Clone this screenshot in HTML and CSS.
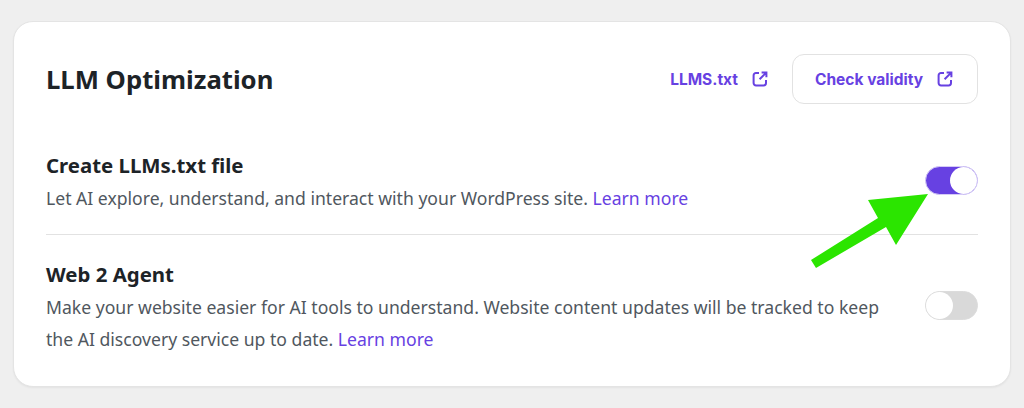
FILE: index.html
```html
<!DOCTYPE html>
<html lang="en">
<head>
  <meta charset="UTF-8">
  <title>LLM Optimization</title>
  <link rel="stylesheet" href="styles.css">
</head>
<body>
  <div class="card">
    <div class="card-head">
      <h2>LLM Optimization</h2>
      <div class="head-actions">
        <a class="action" href="#">LLMS.txt
          <svg class="ext" viewBox="0 0 16 16"><path d="M7 2H4a2.4 2.4 0 0 0-2.4 2.4v7.6A2.4 2.4 0 0 0 4 14.4h7.6a2.4 2.4 0 0 0 2.4-2.4V9M9.6 1.4h4.8v4.8M14.2 1.6L7.6 8.2"/></svg>
        </a>
        <a class="action action-outline" href="#">Check validity
          <svg class="ext" viewBox="0 0 16 16"><path d="M7 2H4a2.4 2.4 0 0 0-2.4 2.4v7.6A2.4 2.4 0 0 0 4 14.4h7.6a2.4 2.4 0 0 0 2.4-2.4V9M9.6 1.4h4.8v4.8M14.2 1.6L7.6 8.2"/></svg>
        </a>
      </div>
    </div>

    <div class="row row-first">
      <div class="row-text">
        <h3>Create LLMs.txt file</h3>
        <p>Let AI explore, understand, and interact with your WordPress site. <a href="#">Learn more</a></p>
      </div>
      <span class="toggle on"></span>
    </div>

    <div class="row row-last">
      <div class="row-text">
        <h3>Web 2 Agent</h3>
        <p>Make your website easier for AI tools to understand. Website content updates will be tracked to keep the AI discovery service up to date. <a href="#">Learn more</a></p>
      </div>
      <span class="toggle"></span>
    </div>
  </div>

  <!-- annotation arrow drawn over the screenshot -->
  <svg class="arrow" width="1024" height="408" viewBox="0 0 1024 408">
    <polygon points="928,194 868,200 878,218 811,260 816,268 886,227 896,245"/>
  </svg>
</body>
</html>
```

FILE: styles.css
```css
body {
  margin: 0;
  width: 1024px;
  height: 408px;
  overflow: hidden;
  background: #efefef;
  font-family: "Noto Sans", "Open Sans", sans-serif;
  padding: 21px 13px 0;
  box-sizing: border-box;
}

.card {
  background: #fff;
  border: 1px solid #e4e4e4;
  border-radius: 20px;
  box-shadow: 0 1px 2px rgba(0,0,0,0.05);
  height: 366px;
  box-sizing: border-box;
  padding: 32px 32px 0;
}

.card-head {
  display: flex;
  justify-content: space-between;
  align-items: center;
  height: 50px;
}

h2 {
  margin: 0;
  font-size: 25.7px;
  font-weight: 700;
  color: #1d2327;
}

.head-actions {
  display: flex;
  align-items: center;
  gap: 24px;
}

.action {
  display: flex;
  align-items: center;
  gap: 14px;
  font-family: Inter, sans-serif;
  font-size: 15.5px;
  font-weight: 700;
  color: #6741e2;
  text-decoration: none;
}

.action-outline {
  height: 50px;
  padding: 0 24px 0 22px;
  box-sizing: border-box;
  border: 1px solid #e2e2e2;
  border-radius: 12px;
}

.ext {
  width: 16px;
  height: 16px;
  fill: none;
  stroke: #6741e2;
  stroke-width: 2;
}

.row {
  display: flex;
  justify-content: space-between;
  align-items: center;
}

.row-first {
  margin-top: 48px;
  padding-bottom: 20px;
  border-bottom: 1px solid #e2e2e2;
}

.row-last {
  padding-top: 26px;
}

.row-text {
  width: 860px;
}

h3 {
  margin: 0;
  font-size: 20.4px;
  line-height: 26px;
  font-weight: 700;
  color: #1d2327;
}

p {
  margin: 4px 0 0;
  font-size: 17.6px;
  line-height: 32px;
  color: #50575e;
}

p a {
  color: #6741e2;
  text-decoration: none;
}

.toggle {
  display: flex;
  width: 53px;
  height: 29px;
  margin-bottom: 6px;
  box-sizing: border-box;
  border: 1px solid #dcdcdc;
  border-radius: 15px;
  background: #d9d9d9;
  justify-content: flex-start;
}

.toggle::after {
  content: "";
  width: 27px;
  height: 27px;
  border-radius: 50%;
  background: #fff;
}

.toggle.on {
  background: #6741e2;
  border-color: #d5cbf6;
  justify-content: flex-end;
}

.arrow {
  position: absolute;
  left: 0;
  top: 0;
  fill: #2be500;
}
```
